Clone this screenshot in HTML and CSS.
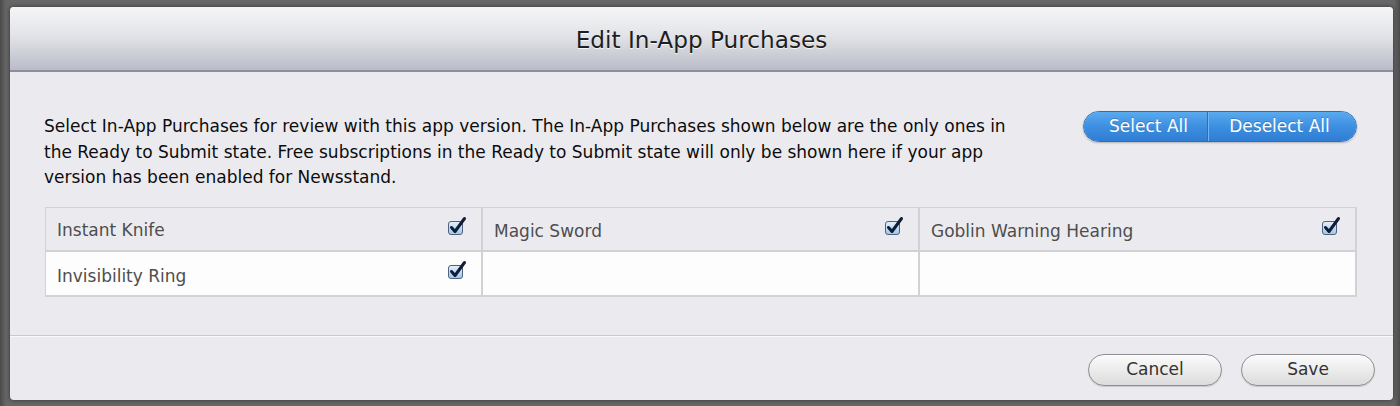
FILE: index.html
```html
<!DOCTYPE html>
<html>
<head>
<meta charset="utf-8">
<link rel="stylesheet" href="styles.css">
</head>
<body>
<div class="frame">
  <div class="dialog">
    <div class="header"><h1 class="title">Edit In-App Purchases</h1></div>
    <div class="content">
      <div class="intro">
        <p class="desc">Select In-App Purchases for review with this app version. The In-App Purchases shown below are the only ones in the Ready to Submit state. Free subscriptions in the Ready to Submit state will only be shown here if your app version has been enabled for Newsstand.</p>
        <div class="segmented">
          <button class="seg seg-left">Select All</button>
          <button class="seg seg-right">Deselect All</button>
        </div>
      </div>
      <div class="grid">
        <div class="cell odd"><span class="name">Instant Knife</span><span class="check"><svg viewBox="0 0 20 20" width="20" height="20"><rect x="1.5" y="5.5" width="14" height="13" rx="2.5" class="box"/><path d="M4.5 11.5 L8 15.5 L17.5 2.5" class="tick"/></svg></span></div>
        <div class="cell odd"><span class="name low">Magic Sword</span><span class="check"><svg viewBox="0 0 20 20" width="20" height="20"><rect x="1.5" y="5.5" width="14" height="13" rx="2.5" class="box"/><path d="M4.5 11.5 L8 15.5 L17.5 2.5" class="tick"/></svg></span></div>
        <div class="cell odd"><span class="name low">Goblin Warning Hearing</span><span class="check"><svg viewBox="0 0 20 20" width="20" height="20"><rect x="1.5" y="5.5" width="14" height="13" rx="2.5" class="box"/><path d="M4.5 11.5 L8 15.5 L17.5 2.5" class="tick"/></svg></span></div>
        <div class="cell even"><span class="name low">Invisibility Ring</span><span class="check"><svg viewBox="0 0 20 20" width="20" height="20"><rect x="1.5" y="5.5" width="14" height="13" rx="2.5" class="box"/><path d="M4.5 11.5 L8 15.5 L17.5 2.5" class="tick"/></svg></span></div>
        <div class="cell even"></div>
        <div class="cell even"></div>
      </div>
    </div>
    <div class="footer">
      <button class="pill">Cancel</button>
      <button class="pill">Save</button>
    </div>
  </div>
</div>
<svg width="0" height="0" style="position:absolute">
  <defs>
    <linearGradient id="cbg" x1="0" y1="0" x2="0" y2="1">
      <stop offset="0" stop-color="#e4f1fc"/>
      <stop offset="1" stop-color="#9ec6ec"/>
    </linearGradient>
  </defs>
</svg>
</body>
</html>
```

FILE: styles.css
```css
* { box-sizing: border-box; }
html, body { margin: 0; padding: 0; }
body {
  width: 1400px;
  height: 406px;
  background: #5a5a5a;
  font-family: "DejaVu Sans", "Liberation Sans", sans-serif;
  overflow: hidden;
}
.frame {
  height: 406px;
  padding: 7px 7px 6px 10px;
  background: linear-gradient(to right, #4a4a4a 0, #666 6px, #666 calc(100% - 6px), #4a4a4a 100%);
}
.dialog {
  height: 393px;
  background: #ebebef;
  border-radius: 4px;
  display: flex;
  flex-direction: column;
  overflow: hidden;
  box-shadow: 0 0 4px rgba(0,0,0,0.5);
}
.header {
  height: 65px;
  flex: none;
  background: linear-gradient(to bottom, #f5f5f7 0%, #e3e4e8 45%, #b9bcc7 100%);
  border-bottom: 2px solid #8b8f9c;
  display: flex;
  align-items: center;
  justify-content: center;
}
.title {
  margin: 0;
  font-weight: normal;
  font-size: 23.2px;
  color: #1e1e1e;
  text-shadow: 0 1px 0 rgba(255,255,255,0.8);
  padding-top: 2px;
}
.content {
  padding: 42px 36px 0 34px;
  flex: none;
}
.intro {
  display: flex;
  justify-content: space-between;
  align-items: flex-start;
}
.desc {
  margin: 0;
  max-width: 985px;
  font-size: 17px;
  line-height: 25.5px;
  color: #0c0c0c;
}
.segmented {
  display: flex;
  margin-top: -3px;
  height: 31px;
  border-radius: 16px;
  overflow: hidden;
  border: 1px solid #2b6fb8;
  box-shadow: 0 1px 2px rgba(0,0,0,0.25);
}
.seg {
  border: 0;
  margin: 0;
  font-family: inherit;
  font-size: 17px;
  color: #fff;
  background: linear-gradient(to bottom, #5aaaf0 0%, #3d8fe0 50%, #2f7dd4 100%);
  text-shadow: 0 -1px 0 rgba(0,0,0,0.2);
  padding: 0 0 1px;
}
.seg-left { width: 124px; border-right: 1px solid #2a6fbf; padding-left: 6px; }
.seg-right { width: 148px; border-left: 1px solid #6fb6f2; padding-right: 6px; }
.grid {
  margin-top: 16px;
  display: grid;
  grid-template-columns: 1fr 1fr 1fr;
  grid-template-rows: 44px 45px;
  border: 1px solid #d2d2d6;
  border-right: 0;
  border-bottom: 0;
  margin-left: 1px;
}
.cell {
  border-right: 2px solid #d2d2d6;
  border-bottom: 2px solid #d2d2d6;
  display: flex;
  align-items: center;
  justify-content: space-between;
  padding: 0 14px 0 11px;
}
.cell.odd { background: #ebebef; }
.cell.even { background: #fdfdfd; }
.name {
  font-size: 17px;
  color: #4e4e4e;
  padding-top: 2px;
}
.name.low { padding-top: 5px; }
.check { display: flex; margin-top: -6px; }
.box {
  fill: url(#cbg);
  stroke: #53627a;
  stroke-width: 1;
}
.tick {
  fill: none;
  stroke: #0f1d36;
  stroke-width: 3;
  stroke-linecap: round;
  stroke-linejoin: round;
}
.footer {
  margin-top: 38px;
  border-top: 1px solid #c5c9d2;
  box-shadow: inset 0 1px 0 #fafafc;
  flex: 1;
  display: flex;
  justify-content: flex-end;
  align-items: flex-start;
  gap: 19px;
  padding: 18px 18px 0 0;
}
.pill {
  width: 134px;
  height: 32px;
  border-radius: 16px;
  border: 1px solid #8e8e92;
  background: linear-gradient(to bottom, #fbfbfb 0%, #ececec 50%, #dcdcdc 100%);
  box-shadow: 0 1px 1px rgba(0,0,0,0.15), inset 0 1px 0 #fff;
  font-family: inherit;
  font-size: 17px;
  color: #333;
  padding: 0 0 1px;
}
```
